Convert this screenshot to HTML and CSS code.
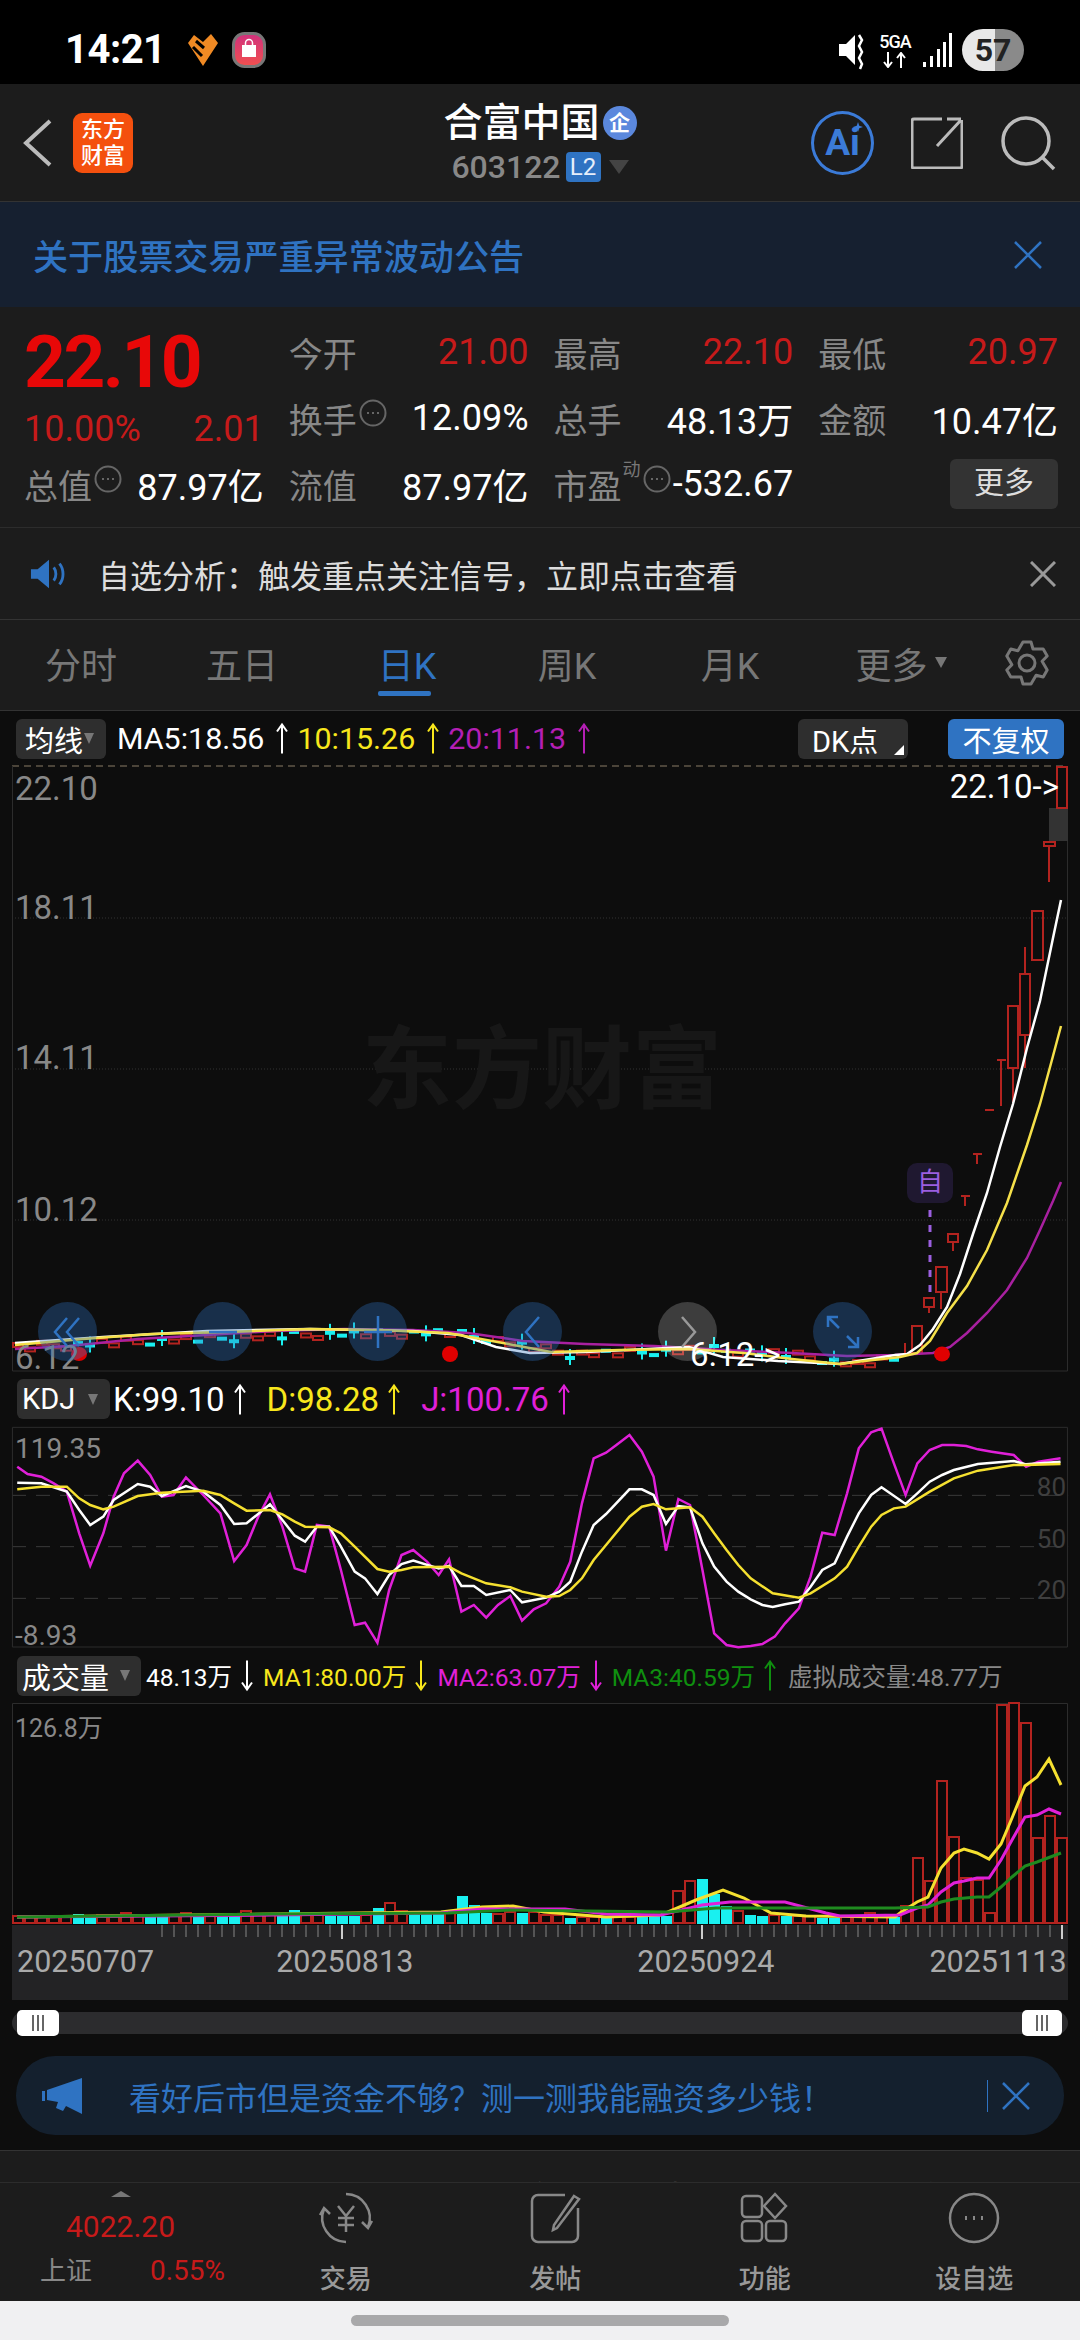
FILE: index.html
```html
<!DOCTYPE html>
<html lang="zh-CN">
<head>
    <meta charset="UTF-8">
    <title>合富中国 603122</title>
    <link rel="stylesheet" href="styles.css">
</head>
<body>
    <svg class="defs" width="0" height="0">
        <symbol id="arrowUp" viewBox="0 0 14 32"><path d="M7 31V2M2 9l5-7 5 7" fill="none" stroke="currentColor" stroke-width="2"/></symbol>
        <symbol id="arrowDown" viewBox="0 0 14 32"><path d="M7 1v29M2 23l5 7 5-7" fill="none" stroke="currentColor" stroke-width="2"/></symbol>
        <symbol id="dots" viewBox="0 0 28 28"><circle cx="14" cy="14" r="12.5" fill="none" stroke="#666" stroke-width="2"/><path d="M8 14h2M13 14h2M18 14h2" stroke="#666" stroke-width="2"/></symbol>
    </svg>

    <div class="status-bar">
        <span class="clock">14:21</span>
        <svg class="app-heart" viewBox="0 0 34 36"><path d="M2 11 8 3l9 7 8-8 7 9-15 23z" fill="#f08a24"/><path d="M10 9l8 7M7 15l9 9" stroke="#000" stroke-width="3"/></svg>
        <svg class="app-bag" viewBox="0 0 34 36"><defs><linearGradient id="bagFill" x1="0" y1="0" x2="0" y2="1"><stop offset="0" stop-color="#d0307e"/><stop offset="1" stop-color="#f2504e"/></linearGradient></defs><rect x="1.500" y="1.500" width="31" height="33" rx="11" fill="url(#bagFill)" stroke="#777" stroke-width="3"/><path d="M10 13h14v12H10z" fill="#fff"/><path d="M13.500 13v-2a3.500 3.500 0 0 1 7 0v2" fill="none" stroke="#fff" stroke-width="1.500"/></svg>
        <div class="status-right">
            <svg class="mute" viewBox="0 0 30 40"><path d="M1 14h7l9-9v30l-9-9H1z" fill="#fff"/><path d="M21 5l3 5-3 6 3 6-3 6 3 6-2 5" fill="none" stroke="#fff" stroke-width="2.500"/></svg>
            <div class="net"><span>5GA</span><svg viewBox="0 0 28 16"><path d="M7 0v15M3 10l4 5 4-5M20 16V1M16 6l4-5 4 5" fill="none" stroke="#fff" stroke-width="2"/></svg></div>
            <svg class="signal" viewBox="0 0 30 36"><path d="M1 30h3v5H1zM8 24h3v11H8zM15 17h3v18h-3zM21 10h3v25h-3zM27 1h3v34h-3z" fill="#fff"/></svg>
            <span class="battery">57</span>
        </div>
    </div>

    <div class="nav">
        <div class="nav-left">
            <svg class="back" viewBox="0 0 30 50"><path d="M27 3 3 25l24 22" fill="none" stroke="#bbb" stroke-width="4"/></svg>
            <div class="logo">东方<br>财富</div>
        </div>
        <div class="nav-center">
            <div class="title-row"><span class="title">合富中国</span><span class="ent">企</span></div>
            <div class="code-row"><span class="code">603122</span><span class="l2">L2</span><i class="code-tri"></i></div>
        </div>
        <div class="nav-right">
            <div class="ai">Ai<svg viewBox="0 0 12 12"><path d="M6 0l1.500 4.500L12 6 7.500 7.500 6 12 4.500 7.500 0 6l4.500-1.500z" fill="#3b7bd8"/></svg></div>
            <svg class="share" viewBox="0 0 52 52"><path d="M31 2H3a2 2 0 0 0-2 2v45a2 2 0 0 0 2 2h46a2 2 0 0 0 2-2V3M26 29 50 3M36 2h14" fill="none" stroke="#bbb" stroke-width="3"/></svg>
            <svg class="search" viewBox="0 0 56 56"><circle cx="25" cy="26" r="23" fill="none" stroke="#bbb" stroke-width="3.500"/><path d="M42 43l11 11" stroke="#bbb" stroke-width="3.500"/></svg>
        </div>
    </div>

    <div class="announce">
        <span>关于股票交易严重异常波动公告</span>
        <svg class="x-blue" viewBox="0 0 28 28"><path d="M1 1l26 26M27 1 1 27" stroke="#2f73c2" stroke-width="2.500"/></svg>
    </div>

    <div class="quote">
        <div class="price-box">
            <div class="price">22.10</div>
            <div class="price-sub"><span>10.00%</span><span>2.01</span></div>
        </div>
        <div class="cell"><span class="lab">今开</span><span class="red">21.00</span></div>
        <div class="cell"><span class="lab">最高</span><span class="red">22.10</span></div>
        <div class="cell"><span class="lab">最低</span><span class="red">20.97</span></div>
        <div class="cell"><span class="lab">换手<svg class="tip"><use href="#dots"/></svg></span><span class="val">12.09%</span></div>
        <div class="cell"><span class="lab">总手</span><span class="val">48.13万</span></div>
        <div class="cell"><span class="lab">金额</span><span class="val">10.47亿</span></div>
        <div class="cell"><span class="lab">总值<svg class="tip"><use href="#dots"/></svg></span><span class="val">87.97亿</span></div>
        <div class="cell"><span class="lab">流值</span><span class="val">87.97亿</span></div>
        <div class="cell"><span class="lab">市盈<sup class="dyn">动</sup><svg class="tip"><use href="#dots"/></svg></span><span class="val">-532.67</span></div>
        <div class="cell cell-end"><span class="more-btn">更多</span></div>
    </div>

    <div class="notice">
        <svg class="speaker" viewBox="0 0 40 32"><path d="M1 11h7L20 1v30L8 21H1z" fill="#2f73c2"/><path d="M25 9c3 4 3 10 0 14M31 5c5 6 5 16 0 22" fill="none" stroke="#2f73c2" stroke-width="3"/></svg>
        <span class="notice-text">自选分析：触发重点关注信号，立即点击查看</span>
        <svg class="x-gray" viewBox="0 0 26 26"><path d="M1 1l24 24M25 1 1 25" stroke="#999" stroke-width="3"/></svg>
    </div>

    <div class="tabs">
        <span class="tab">分时</span>
        <span class="tab">五日</span>
        <span class="tab tab-on"><span class="tab-text">日K</span></span>
        <span class="tab">周K</span>
        <span class="tab">月K</span>
        <span class="tab tab-more">更多<i></i></span>
        <svg class="gear" viewBox="0 0 48 48"><polygon points="20,3 28,3 30,10 40.200,10 44.200,17 39.100,22.200 44.200,31 40.200,38 33.100,36.200 28,45 20,45 18,38 7.800,38 3.800,31 8.900,25.800 3.800,17 7.800,10 14.900,11.800" fill="none" stroke="#777" stroke-width="3" stroke-linejoin="round"/><circle cx="24" cy="24" r="8" fill="none" stroke="#777" stroke-width="3"/></svg>
    </div>

    <div class="legend legend-ma">
        <span class="chip chip-ma">均线<i></i></span>
        <span class="c-white">MA5:18.56</span><svg class="arr c-white"><use href="#arrowUp"/></svg>
        <span class="c-yellow">10:15.26</span><svg class="arr c-yellow"><use href="#arrowUp"/></svg>
        <span class="c-purple">20:11.13</span><svg class="arr c-purple"><use href="#arrowUp"/></svg>
        <span class="chip chip-dk">DK点<b></b></span>
        <span class="chip chip-fq">不复权</span>
    </div>

    <div class="plot plot-main">
        <div class="watermark">东方财富</div>
        <svg class="chart" viewBox="12 766 1056 605">
            <path d="M12 766H1068" stroke="#8a7d66" stroke-width="1" stroke-dasharray="7 5"/>
            <path d="M12 918H1068M12 1069H1068M12 1220H1068" stroke="#333" stroke-width="1" stroke-dasharray="1 2"/>
            <path d="M12.500 766V1371H1067.500V766" fill="none" stroke="#2c2c2c"/>
            <rect x="1049" y="808" width="19" height="33" fill="#333"/>
            <g id="smallCandles"></g>
            <g fill="none" stroke="#b3231f" stroke-width="2">
                <rect x="1057" y="767" width="10" height="41"/>
                <rect x="1044" y="842" width="11" height="4"/><path d="M1049 846v36"/>
                <rect x="1032" y="911" width="11" height="49"/>
                <rect x="1020" y="974" width="10" height="61"/><path d="M1025 947v27M1025 1035v33"/>
                <rect x="1008" y="1006" width="10" height="62"/><path d="M1013 1068v34"/>
                <path d="M997 1060h9M1001 1060v46"/>
                <path d="M985 1110h9"/>
                <path d="M973 1154h9M977 1154v10"/>
                <path d="M961 1196h9M965 1196v10"/>
                <rect x="948" y="1234" width="10" height="8"/><path d="M953 1242v9"/>
                <rect x="936" y="1267" width="11" height="25"/><path d="M941 1292v17"/>
                <rect x="924" y="1298" width="10" height="9"/><path d="M929 1307v6"/>
                <rect x="912" y="1326" width="10" height="27"/>
                <path d="M905 1343v10"/>
            </g>
            <path d="M930 1210v87" stroke="#9b5fe0" stroke-width="3" stroke-dasharray="7 8"/>
            <polyline class="ln" stroke="#a820a0" points="15,1349 69,1346 138,1339 207,1335 275,1331 344,1329 413,1330 468,1333 523,1341 585,1344 654,1346 723,1350 792,1353 847,1356 895,1355 933,1353 950,1347 967,1333 987,1313 1007,1290 1027,1258 1040,1230 1053,1201 1061,1182"/>
            <polyline class="ln" stroke="#ffffff" points="15,1343 103,1337 207,1331 310,1329 413,1331 461,1335 496,1347 530,1353 585,1352 689,1347 723,1357 778,1361 840,1364 895,1355 907,1354 920,1345 933,1329 947,1307 960,1274 973,1234 987,1193 1000,1147 1013,1104 1027,1048 1040,1001 1053,938 1061,900"/>
            <polyline class="ln" stroke="#f5e04a" points="15,1345 83,1339 151,1334 227,1332 310,1329 379,1330 448,1333 503,1343 551,1352 620,1350 689,1349 744,1353 792,1359 840,1364 873,1360 900,1357 917,1353 930,1341 947,1313 967,1286 987,1250 1007,1203 1027,1145 1040,1104 1053,1056 1061,1026"/>
            <ellipse cx="79" cy="1354" rx="8" ry="7" fill="#e00000"/>
            <ellipse cx="450" cy="1354" rx="8" ry="8" fill="#e00000"/>
            <ellipse cx="942" cy="1354" rx="8" ry="7.500" fill="#e00000"/>
        </svg>
        <span class="ax ax-1">22.10</span>
        <span class="ax ax-2">18.11</span>
        <span class="ax ax-3">14.11</span>
        <span class="ax ax-4">10.12</span>
        <span class="ax ax-5">6.12</span>
        <span class="mark mark-hi">22.10-&gt;</span>
        <span class="mark mark-lo">6.12-&gt;</span>
        <span class="self-tag">自</span>
        <div class="chart-btns">
            <span class="cbtn"><svg viewBox="0 0 40 40"><path d="M19 6 7 20l12 14M31 6 19 20l12 14" fill="none" stroke="#2f73c2" stroke-width="2.500"/></svg></span>
            <span class="cbtn"><svg viewBox="0 0 40 40"><path d="M6 20h28" stroke="#2f73c2" stroke-width="2.500"/></svg></span>
            <span class="cbtn"><svg viewBox="0 0 40 40"><path d="M6 20h28M20 4v32" stroke="#2f73c2" stroke-width="2.500"/></svg></span>
            <span class="cbtn"><svg viewBox="0 0 40 40"><path d="M26 5 13 20l13 15" fill="none" stroke="#2f73c2" stroke-width="2.500"/></svg></span>
            <span class="cbtn cbtn-off"><svg viewBox="0 0 40 40"><path d="M14 5l13 15-13 15" fill="none" stroke="#999" stroke-width="2.500"/></svg></span>
            <span class="cbtn"><svg viewBox="0 0 40 40"><path d="M5 5l11 11M5 15V5h10M35 35 24 24M35 25v10H25" fill="none" stroke="#2f73c2" stroke-width="2.500"/></svg></span>
        </div>
    </div>

    <div class="legend legend-kdj">
        <span class="chip chip-kdj">KDJ<i></i></span>
        <span class="c-white">K:99.10</span><svg class="arr c-white"><use href="#arrowUp"/></svg>
        <span class="c-yellow">D:98.28</span><svg class="arr c-yellow"><use href="#arrowUp"/></svg>
        <span class="c-pink">J:100.76</span><svg class="arr c-pink"><use href="#arrowUp"/></svg>
    </div>

    <div class="plot plot-kdj">
        <svg class="chart" viewBox="17.400 171 1533.400 663" preserveAspectRatio="none">
            <path class="keep" d="M17.400 376H1551M17.400 530H1551M17.400 685H1551" stroke="#3a3a3a" stroke-dasharray="14 10"/>
            <path class="keep" d="M18 831V172H1550V831H18" fill="none" stroke="#2c2c2c"/>
            <polyline class="ln2" stroke="#e020d8" points="25,290 40,312 60,320 78,340 97,365 115,490 131,587 150,490 165,380 180,310 200,272 218,315 235,380 252,375 270,322 295,375 320,430 340,573 358,525 375,440 392,373 410,470 428,595 443,605 460,465 478,470 495,600 515,765 530,758 548,818 565,660 583,555 600,540 620,575 637,615 652,568 670,725 688,705 706,743 723,705 741,678 758,752 775,718 793,700 812,650 828,575 845,400 862,265 880,248 895,225 914,195 932,245 949,320 967,542 985,387 1002,405 1020,600 1037,790 1055,825 1072,832 1090,828 1107,822 1125,800 1140,760 1160,715 1177,620 1194,488 1212,495 1230,370 1247,235 1265,187 1280,176 1298,280 1315,375 1332,280 1350,240 1368,225 1385,225 1403,228 1420,238 1440,245 1472,255 1490,290 1508,275 1540,265"/>
            <polyline class="ln2" stroke="#ffffff" points="25,338 60,340 97,365 115,420 131,465 150,440 165,390 200,342 218,350 235,378 270,348 295,365 320,405 340,462 358,460 392,403 410,450 428,497 443,515 460,470 478,470 495,530 515,605 530,625 548,672 565,615 583,582 600,572 637,595 652,588 670,648 688,648 706,675 741,660 758,697 793,683 812,665 828,635 845,545 862,465 880,432 914,358 932,358 949,375 967,462 985,408 1002,412 1020,520 1037,590 1055,635 1072,665 1090,688 1107,705 1122,711 1140,703 1160,695 1177,650 1194,600 1212,580 1230,500 1247,430 1265,375 1280,352 1315,402 1332,370 1350,335 1368,315 1385,300 1420,282 1472,273 1490,283 1540,275"/>
            <polyline class="ln2" stroke="#f5e030" points="25,358 60,350 97,350 115,385 131,405 150,418 165,410 200,378 235,368 295,362 320,375 340,400 358,422 392,420 410,433 428,455 443,470 478,472 495,490 515,530 548,597 565,605 583,600 600,592 652,590 670,610 706,640 741,652 758,665 793,680 812,678 828,660 845,625 862,570 880,525 914,440 932,410 949,402 967,418 1002,412 1020,440 1037,490 1055,540 1072,585 1090,625 1122,670 1160,683 1177,670 1212,625 1230,590 1247,530 1265,470 1280,435 1298,415 1315,410 1350,365 1385,325 1420,302 1472,285 1490,285 1540,282"/>
        </svg>
        <span class="ax ax-kt">119.35</span>
        <span class="ax ax-kb">-8.93</span>
        <span class="ax-r ax-80">80</span>
        <span class="ax-r ax-50">50</span>
        <span class="ax-r ax-20">20</span>
    </div>

    <div class="legend legend-vol">
        <span class="chip chip-vol">成交量<i></i></span>
        <span class="c-white">48.13万</span><svg class="arr c-white"><use href="#arrowDown"/></svg>
        <span class="c-yellow">MA1:80.00万</span><svg class="arr c-yellow"><use href="#arrowDown"/></svg>
        <span class="c-pink">MA2:63.07万</span><svg class="arr c-pink"><use href="#arrowDown"/></svg>
        <span class="c-green">MA3:40.59万</span><svg class="arr c-green"><use href="#arrowUp"/></svg>
        <span class="c-gray">虚拟成交量:48.77万</span>
    </div>

    <div class="plot plot-vol">
        <svg class="chart" viewBox="12 1703 1056 222">
            <path d="M12.500 1924V1703.500H1067.500V1924" fill="none" stroke="#2c2c2c"/>
            <g id="volBars"></g>
            <polyline class="ln3" stroke="#f5e030" points="17,1917 441,1912 482,1907 513,1906 544,1912 606,1917 661,1915 696,1900 723,1890 744,1898 771,1913 806,1916 895,1917 900,1913 917,1902 928,1897 941,1868 954,1853 964,1849 977,1853 989,1859 1001,1844 1012,1818 1025,1786 1037,1777 1049,1759 1061,1785"/>
            <polyline class="ln3" stroke="#e020d8" points="17,1917 275,1915 441,1913 482,1909 565,1909 606,1914 661,1915 702,1905 730,1902 785,1902 826,1913 840,1916 900,1915 917,1908 928,1905 941,1892 954,1883 964,1881 977,1878 989,1878 1001,1860 1012,1840 1025,1817 1037,1815 1049,1809 1061,1814"/>
            <polyline class="ln3" stroke="#1f8a1f" points="17,1917 275,1914 448,1913 510,1910 668,1912 716,1908 895,1908 928,1907 941,1902 954,1899 977,1897 989,1897 1001,1887 1012,1877 1025,1866 1037,1862 1061,1853"/>
        </svg>
        <span class="ax ax-vt">126.8万</span>
    </div>

    <div class="axis">
        <svg class="ticks" viewBox="12 0 1056 14"><path id="axisTicks" stroke="#666" stroke-width="1.500"/><path d="M342 0v14M702 0v14M1062 0v14" stroke="#ccc" stroke-width="2"/></svg>
        <div class="dates"><span>20250707</span><span>20250813</span><span>20250924</span><span>20251113</span></div>
    </div>

    <div class="slider">
        <span class="handle"><i></i><i></i><i></i></span>
        <span class="handle"><i></i><i></i><i></i></span>
    </div>

    <div class="promo">
        <svg class="horn" viewBox="0 0 40 36"><path d="M0 13h3v10H0zM5 12 40 0v36L24 28l-3 5-7-3 2-6-11-2z" fill="#2f73c2"/></svg>
        <span class="promo-text">看好后市但是资金不够？测一测我能融资多少钱！</span>
        <i class="promo-sep"></i>
        <svg class="x-blue x-promo" viewBox="0 0 28 28"><path d="M1 1l26 26M27 1 1 27" stroke="#2f73c2" stroke-width="2.500"/></svg>
    </div>

    <div class="sub-tabs">
        <span class="sub-on">股吧</span><span>资讯</span><span>公告</span><span>资金</span><span>研报</span><span>财务</span><span>简况</span>
    </div>

    <div class="bottom-bar">
        <div class="index-box">
            <i class="index-tri"></i>
            <div class="index-val">4022.20</div>
            <div class="index-sub"><span>上证</span><span class="index-pct">0.55%</span></div>
        </div>
        <div class="tool">
            <svg viewBox="0 0 60 60"><path d="M30 6a24 24 0 0 1 22 33M46 34l6 6 4-7M30 54a24 24 0 0 1-22-33M14 26l-6-6-4 7M22 18l8 10 8-10M30 28v16M22 30h16M22 37h16"/></svg>
            <span>交易</span>
        </div>
        <div class="tool">
            <svg viewBox="0 0 60 60"><path d="M40 7H13a6 6 0 0 0-6 6v35a6 6 0 0 0 6 6h34a6 6 0 0 0 6-6V20M49 8l5 3-22 29-4 2 1-5z"/></svg>
            <span>发帖</span>
        </div>
        <div class="tool">
            <svg viewBox="0 0 60 60"><rect x="7" y="8" width="20" height="21" rx="4"/><rect x="7" y="33" width="20" height="20" rx="4"/><rect x="31" y="33" width="20" height="20" rx="4"/><path d="M40 6l11 12-11 12-11-12z"/></svg>
            <span>功能</span>
        </div>
        <div class="tool">
            <svg viewBox="0 0 60 60"><circle cx="30" cy="30" r="24"/><path d="M21 30h2M29 30h2M37 30h2"/></svg>
            <span>设自选</span>
        </div>
    </div>

    <div class="home-area"><i class="home-bar"></i></div>

    <script src="charts.js"></script>
</body>
</html>
```

FILE: styles.css
```css
* { box-sizing: border-box; }
html, body { margin: 0; padding: 0; }
body { width: 1080px; height: 2340px; overflow: hidden; background-color: #0d0d0d; color: #fff; font-family: Roboto, "Noto Sans CJK SC", sans-serif; }
i { display: block; font-style: normal; }
.defs { position: absolute; }

.status-bar { height: 84px; background-color: #000; display: flex; align-items: center; padding: 0 56px 0 65px; }
.clock { font-size: 40px; font-weight: 700; line-height: 1; margin-top: 16px; letter-spacing: -0.5px; }
.app-heart { width: 34px; height: 36px; margin: 16px 0 0 20px; }
.app-bag { width: 34px; height: 36px; margin: 16px 0 0 12px; }
.status-right { margin-left: auto; display: flex; align-items: center; margin-top: 16px; }
.mute { width: 30px; height: 40px; margin-right: 12px; }
.net { width: 30px; display: flex; flex-direction: column; align-items: center; margin-right: 12px; }
.net span { font-size: 18px; line-height: 20px; font-weight: 500; letter-spacing: -1px; }
.net svg { width: 28px; height: 16px; }
.signal { width: 30px; height: 36px; margin-right: 10px; }
.battery { width: 62px; height: 42px; border-radius: 21px; background: linear-gradient(90deg, #e8e8e8 54%, #8a8a8a 54%); color: #222; font-size: 32px; font-weight: 700; display: flex; align-items: center; justify-content: center; }

.nav { height: 118px; background-color: #1c1c1c; border-bottom: 1px solid #333; display: grid; grid-template-columns: 1fr auto 1fr; align-items: center; }
.nav-left { display: flex; align-items: center; padding-left: 23px; }
.back { width: 30px; height: 50px; }
.logo { width: 60px; height: 60px; margin-left: 20px; border-radius: 9px; background-color: #f4500e; font-size: 22px; line-height: 26px; font-weight: 500; text-align: center; padding-top: 4px; }
.nav-center { display: flex; flex-direction: column; align-items: center; }
.title-row { display: flex; align-items: center; height: 44px; }
.title { font-size: 39px; font-weight: 500; line-height: 44px; }
.ent { width: 34px; height: 34px; margin-left: 3px; border-radius: 50%; background-color: #5b88dd; font-size: 21px; font-weight: 700; line-height: 34px; text-align: center; }
.code-row { display: flex; align-items: center; height: 34px; margin-top: 5px; }
.code { font-size: 32px; font-weight: 500; color: #888; }
.l2 { width: 35px; height: 30px; margin-left: 5px; border-radius: 4px; background-color: #2f73c2; font-size: 24px; line-height: 30px; text-align: center; color: #e6eefa; }
.code-tri { margin-left: 8px; border-left: 10px solid transparent; border-right: 10px solid transparent; border-top: 14px solid #444; }
.nav-right { display: flex; align-items: center; justify-content: flex-end; padding-right: 23px; }
.ai { position: relative; width: 63px; height: 64px; border: 3px solid #3b7bd8; border-radius: 50%; color: #3b7bd8; font-size: 37px; font-weight: 700; line-height: 58px; text-align: center; }
.ai svg { position: absolute; top: 8px; right: 8px; width: 10px; height: 10px; }
.share { width: 52px; height: 52px; margin-left: 37px; }
.search { width: 56px; height: 56px; margin-left: 38px; }

.announce { height: 105px; background-color: #162030; display: flex; align-items: center; justify-content: space-between; padding: 0 38px 0 33px; color: #2f73c2; font-size: 35.100px; font-weight: 500; }
.x-blue { width: 28px; height: 28px; }

.quote { height: 221px; background-color: #1c1c1c; border-bottom: 1px solid #2c2c2c; padding: 12px 22px 0 24px; display: grid; grid-template-columns: repeat(4, 1fr); grid-auto-rows: 66px; column-gap: 25px; font-size: 36px; }
.price-box { grid-row: 1 / span 2; padding-top: 3px; }
.price { font-size: 73px; font-weight: 700; line-height: 80px; color: #e80808; letter-spacing: -2.500px; }
.price-sub { display: flex; justify-content: space-between; color: #c61a1a; font-size: 36px; line-height: 40px; margin-top: 7px; }
.cell { display: flex; align-items: center; justify-content: space-between; }
.cell-end { justify-content: flex-end; }
.lab { color: #888; font-size: 34px; display: flex; align-items: center; position: relative; }
.tip { width: 28px; height: 28px; margin: -10px 0 0 2px; }
.dyn { font-size: 18px; color: #777; margin: -28px 0 0 1px; line-height: 1; }
.red { color: #c61a1a; }
.val { color: #fff; }
.more-btn { width: 108px; height: 50px; background-color: #333; border-radius: 6px; font-size: 30px; line-height: 48px; text-align: center; color: #ddd; }

.notice { height: 92px; background-color: #1c1c1c; border-bottom: 1px solid #333; display: flex; align-items: center; padding: 0 24px 0 30px; }
.speaker { width: 38px; height: 32px; }
.notice-text { margin-left: 30px; font-size: 32px; color: #ddd; }
.x-gray { width: 26px; height: 26px; margin-left: auto; }

.tabs { height: 91px; background-color: #1c1c1c; border-bottom: 1px solid #333; display: grid; grid-template-columns: 162px 160px 170px 150px 176px 166px 1fr; align-items: center; color: #777; font-size: 36px; padding-bottom: 5px; text-align: center; }
.tab-on { color: #2f73c2; }
.tab-text { position: relative; display: inline-block; }
.tab-text::after { content: ""; position: absolute; left: 0; width: 53px; height: 5px; bottom: -7px; border-radius: 2px; background-color: #2f73c2; }
.tab-more { display: flex; align-items: center; justify-content: center; }
.tab-more i { margin-left: 7px; border-left: 6px solid transparent; border-right: 6px solid transparent; border-top: 11px solid #777; }
.gear { width: 48px; height: 48px; justify-self: end; margin-right: 29px; }

.legend { display: flex; align-items: center; }
.legend-ma { height: 55px; font-size: 30.400px; padding-left: 16px; }
.legend-kdj { height: 56px; font-size: 33px; padding-left: 17px; }
.legend-vol { height: 55px; font-size: 24.500px; padding-left: 17px; }
.chip { height: 40px; background-color: #2e2e2e; border-radius: 6px; display: flex; align-items: center; flex: none; position: relative; font-size: 29px; }
.chip i { border-left: 5px solid transparent; border-right: 5px solid transparent; border-top: 11px solid #777; }
.chip-ma { width: 90px; padding-left: 9px; margin-right: 11px; }
.chip-ma i { margin-left: 1px; }
.chip-kdj { width: 93px; padding-left: 5px; margin-right: 3px; }
.chip-kdj i { margin-left: 13px; }
.chip-vol { width: 124px; padding-left: 5px; margin-right: 5px; }
.chip-vol i { margin-left: 11px; }
.chip-dk { width: 110px; padding-left: 14px; margin-left: auto; }
.chip-dk b { position: absolute; right: 4px; bottom: 4px; border-left: 10px solid transparent; border-bottom: 10px solid #fff; }
.chip-fq { width: 116px; justify-content: center; background-color: #2f73c2; margin: 0 16px 0 40px; }
.arr { width: 14px; height: 33px; margin: 0 8px 0 11px; flex: none; }
.legend-vol .arr { margin: 0 9px 0 8px; }
.legend-kdj .arr { margin: 0 20px 0 8px; }
.c-white { color: #fff; }
.c-yellow { color: #f8e71c; }
.c-purple { color: #b41fb4; }
.c-pink { color: #e020d8; }
.c-green { color: #0f8f0f; }
.c-gray { color: #888; margin-left: 2px; }

.plot { position: relative; margin: 0 12px; }
.plot-main { height: 605px; }
.plot-kdj { height: 221px; }
.plot-vol { height: 222px; background-color: #0a0a0a; }
.chart { display: block; width: 100%; height: 100%; overflow: visible; }
.ln { fill: none; stroke-width: 2.500; }
.ln2 { fill: none; stroke-width: 2.500; vector-effect: non-scaling-stroke; }
.keep { vector-effect: non-scaling-stroke; }
.ln3 { fill: none; stroke-width: 3; }
.watermark { position: absolute; left: 350px; top: 245px; font-size: 90px; line-height: 120px; font-weight: 700; color: #171717; white-space: nowrap; }
.ax { position: absolute; left: 3px; color: #888; font-size: 33px; line-height: 30px; }
.ax-1 { top: 8px; }
.ax-2 { top: 127px; }
.ax-3 { top: 277px; }
.ax-4 { top: 429px; }
.ax-5 { top: 577px; }
.ax-kt { top: 7px; font-size: 28px; }
.ax-kb { top: 194px; font-size: 28px; }
.ax-vt { top: 11px; font-size: 25px; }
.ax-r { position: absolute; right: 2px; color: #3f3f3f; font-size: 26px; line-height: 26px; }
.ax-80 { top: 47px; }
.ax-50 { top: 99px; }
.ax-20 { top: 150px; }
.mark { position: absolute; color: #fff; font-size: 33px; line-height: 30px; white-space: nowrap; }
.mark-hi { top: 6px; right: 9px; }
.mark-lo { top: 574px; left: 678px; }
.self-tag { position: absolute; left: 895px; top: 397px; width: 46px; height: 40px; border-radius: 10px; background-color: #1f1830; color: #9b5fe0; font-size: 26px; line-height: 38px; text-align: center; }
.chart-btns { position: absolute; left: 26px; top: 536px; display: flex; gap: 96px; }
.cbtn { width: 59px; height: 59px; border-radius: 50%; background-color: rgba(47, 115, 194, 0.34); display: flex; align-items: center; justify-content: center; }
.cbtn-off { background-color: rgba(255, 255, 255, 0.2); }
.cbtn svg { width: 40px; height: 40px; }

.axis { height: 75px; margin: 0 12px; background-color: #232325; }
.ticks { display: block; width: 100%; height: 14px; }
.dates { display: flex; padding: 5px 0 0 5px; color: #aaa; font-size: 30.500px; line-height: 36px; }
.dates span:nth-child(2) { margin-left: 122px; }
.dates span:nth-child(3) { margin-left: 224px; }
.dates span:nth-child(4) { margin-left: 155px; }

.slider { height: 22px; margin: 12px 12px 22px; background-color: #2c2c2e; border-radius: 11px; display: flex; justify-content: space-between; align-items: center; padding: 0 6px 0 5px; }
.handle { width: 42px; height: 26px; background-color: #fff; border-radius: 5px; display: flex; justify-content: center; gap: 3px; padding: 5px 0; }
.handle:last-child { width: 40px; }
.handle i { width: 2px; background-color: #666; }

.promo { height: 79px; margin: 0 16px; border-radius: 39px; background-color: #14202e; display: flex; align-items: center; padding: 0 34px 0 26px; color: #2f73c2; font-size: 32px; }
.horn { width: 40px; height: 36px; }
.promo-text { margin-left: 47px; white-space: nowrap; }
.promo-sep { width: 1px; height: 32px; margin-left: auto; background-color: #2f73c2; }
.x-promo { margin-left: 14px; }

.sub-tabs { height: 32px; margin-top: 15px; padding: 25px 0 0 15px; overflow: hidden; background-color: #1c1c1c; border-top: 1px solid #333; display: grid; grid-template-columns: repeat(7, 145px); font-size: 34px; line-height: 46px; color: #666; text-align: center; }
.sub-on { color: #2f73c2; }

.bottom-bar { height: 119px; background-color: #1c1c1c; border-top: 1px solid #2c2c2c; display: grid; grid-template-columns: 241px repeat(4, 209.500px); }
.index-box { padding-top: 8px; display: flex; flex-direction: column; align-items: center; }
.index-tri { border-left: 10px solid transparent; border-right: 10px solid transparent; border-bottom: 6px solid #777; }
.index-val { color: #c61a1a; font-size: 30px; line-height: 32px; margin-top: 14px; }
.index-sub { width: 185px; margin-left: 24px; display: flex; justify-content: space-between; align-items: center; margin-top: 12px; color: #888; font-size: 26px; line-height: 32px; }
.index-pct { color: #c61a1a; font-size: 28px; }
.tool { display: flex; flex-direction: column; align-items: center; padding-top: 5px; color: #999; font-size: 26px; font-weight: 500; line-height: 30px; }
.tool svg { width: 60px; height: 60px; fill: none; stroke: #888; stroke-width: 2.500; margin-bottom: 16px; }
.tool:last-child svg path { stroke-width: 4; }

.home-area { height: 39px; background-color: #f0f0f2; padding-top: 14px; }
.home-bar { width: 378px; height: 11px; margin: 0 auto; border-radius: 6px; background-color: #a8a8aa; }
```

FILE: charts.js
```js
// volume per trading day, negative = down day (cyan)
const volumes = [
    7, 7, 7, 7, 7, -10, -8, 8, 8, 10, 8, -10, -8, 8, 10, -8, 8, -8, -8, 12,
    9, 8, -8, -14, 8, 8, -8, -8, -8, 8, -16, 20, 12, -10, -10, -10, 10, -28, -19, -11,
    9, 11, -11, 11, 8, 8, -6, 6, 6, -6, 6, 6, -8, -8, -8, 32, 42, -45, -30, -18,
    12, -9, -8, 8, -8, 7, 7, -6, -6, 7, 7, 10, 7, -7, 17, 65, 42, 142, 86, 45,
    43, 10, 218, 220, 200, 85, 107, 85
];
const RED = "#b3231f";
const CYAN = "#19f0f0";
const NS = "http://www.w3.org/2000/svg";

function addRect(parent, x, y, w, h, up) {
    const r = document.createElementNS(NS, "rect");
    r.setAttribute("x", x);
    r.setAttribute("y", y);
    r.setAttribute("width", w);
    r.setAttribute("height", h);
    r.setAttribute("fill", up ? "none" : CYAN);
    r.setAttribute("stroke", up ? RED : "none");
    r.setAttribute("stroke-width", up ? 2 : 0);
    parent.appendChild(r);
}

function drawVolume() {
    const g = document.getElementById("volBars");
    volumes.forEach((v, i) => {
        const x = 12 + i * 12;
        if (v > 0) addRect(g, x + 1, 1923 - v, 10, v, true);
        else addRect(g, x + 1, 1924 + v, 11, -v, false);
    });
}

// where the flat part of the price sits, [bar index, y]
const priceLine = [[0, 1345], [12, 1338], [25, 1332], [36, 1330], [40, 1338], [46, 1352], [58, 1347], [64, 1352], [70, 1362], [74, 1355]];
const wiggle = [-2, 3, -3, 1, 4, -1, 2];

function priceAt(i) {
    for (let n = 1; n < priceLine.length; n++) {
        const [a, ya] = priceLine[n - 1];
        const [b, yb] = priceLine[n];
        if (i <= b) return ya + (yb - ya) * (i - a) / (b - a);
    }
    return 1355;
}

function drawSmallCandles() {
    const g = document.getElementById("smallCandles");
    for (let i = 0; i < 74; i++) {
        const up = volumes[i] > 0;
        const x = 12 + i * 12;
        const y = priceAt(i) + wiggle[i % 7];
        addRect(g, x + 1, y, 10, 4, up);
        if (!up && i % 2 === 0) addRect(g, x + 5, y - 7, 2, 16, false);
    }
}

function drawTicks() {
    let d = "";
    for (let x = 162; x < 1062; x += 12) d += "M" + x + " 0v12";
    document.getElementById("axisTicks").setAttribute("d", d);
}

drawVolume();
drawSmallCandles();
drawTicks();
```
